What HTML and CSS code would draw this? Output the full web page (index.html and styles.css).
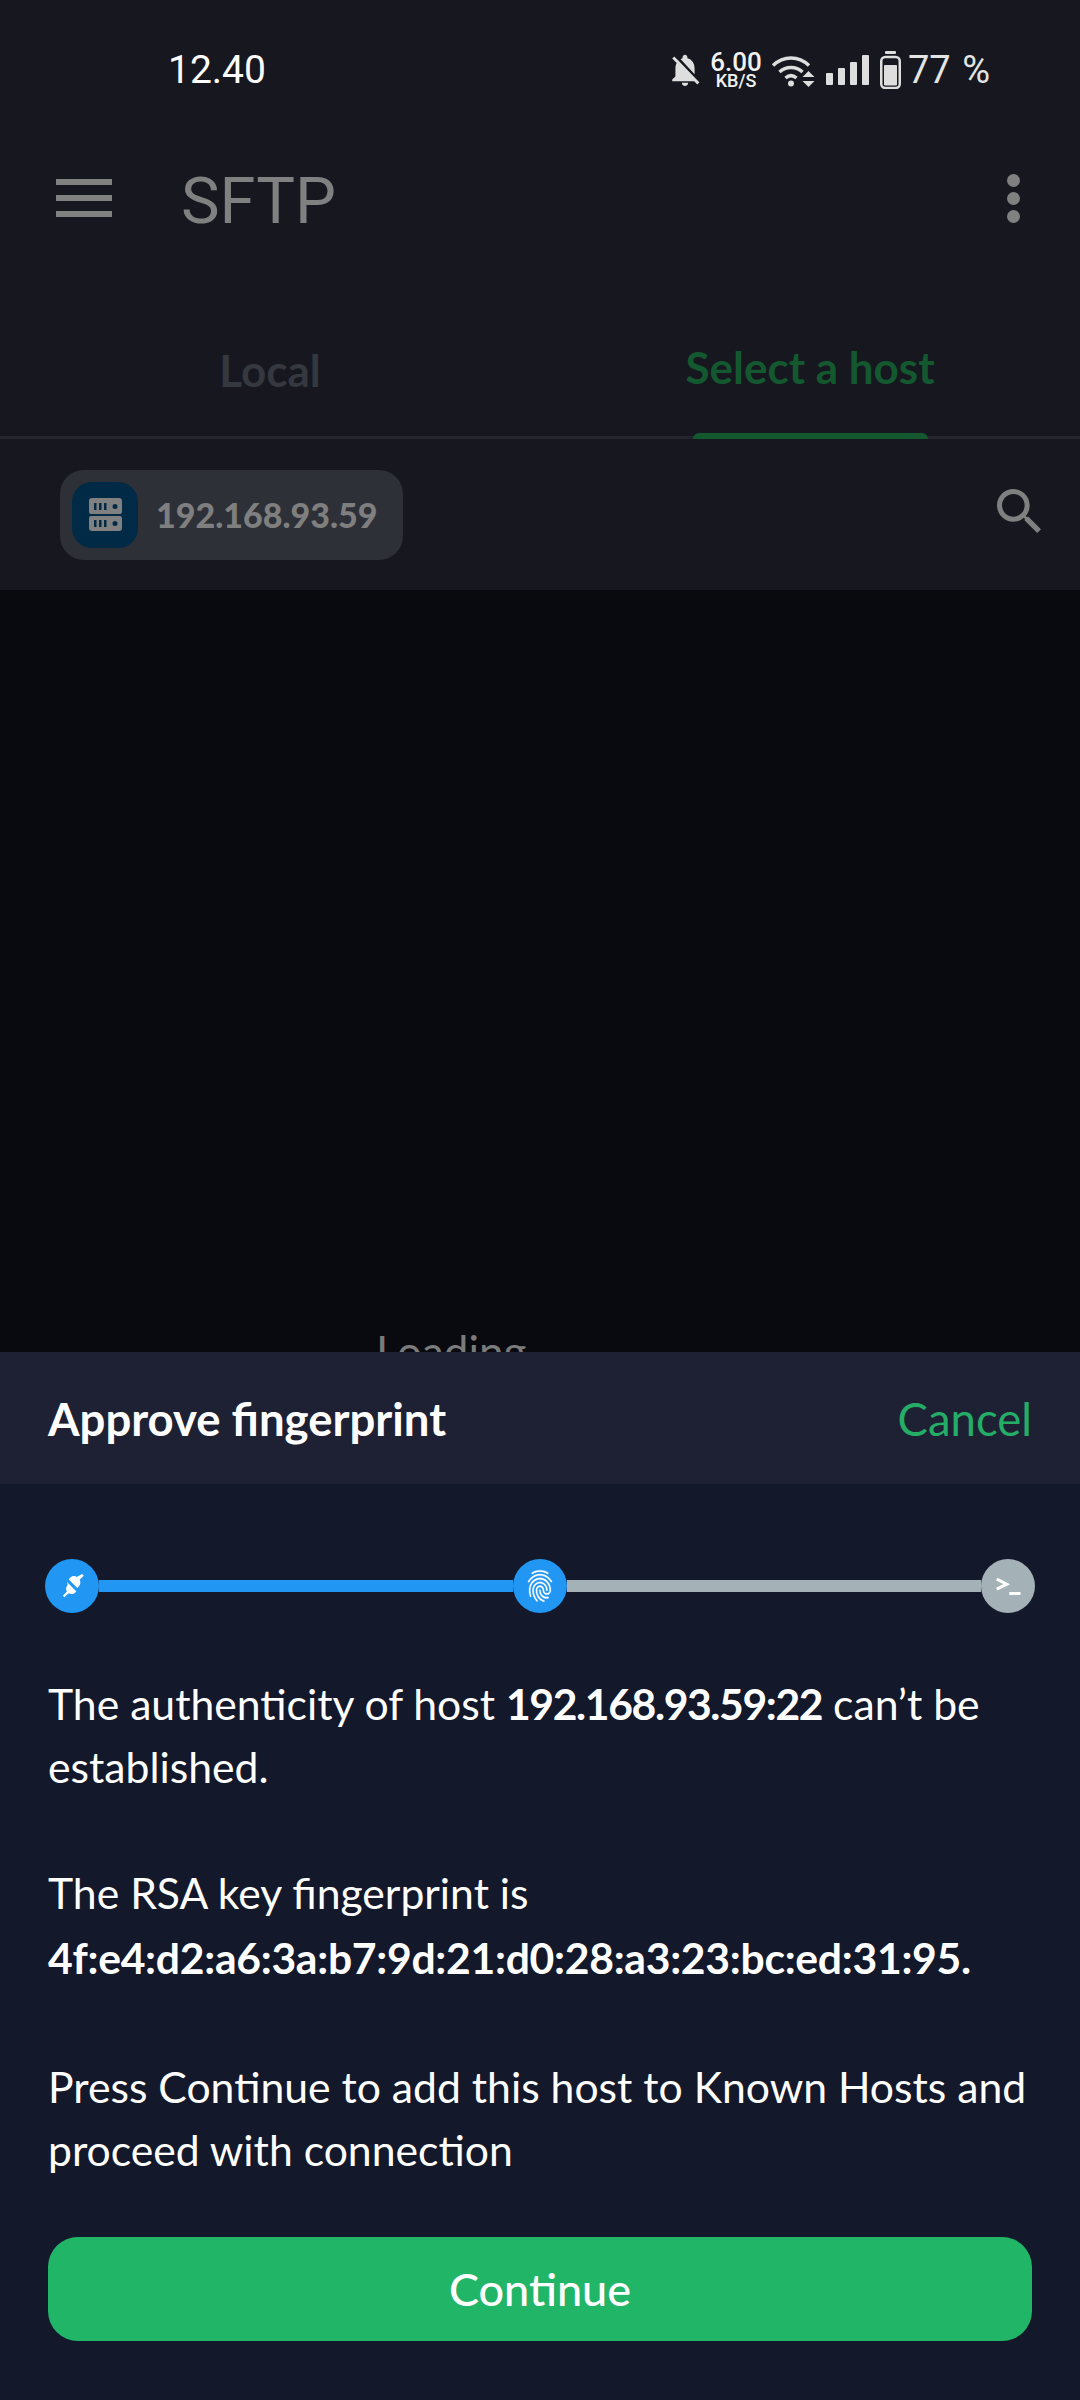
FILE: index.html
```html
<!DOCTYPE html>
<html lang="en">
<head>
<meta charset="UTF-8">
<meta name="viewport" content="width=device-width, initial-scale=1.0">
<title>SFTP</title>
<link rel="stylesheet" href="styles.css">
</head>
<body>

<div class="app">
  <div class="status-bar">
    <span class="time">12.40</span>
    <div class="status-icons">
      <svg class="icon-bell" viewBox="3 2 18 20"><path d="M20 18.69L7.84 6.14 5.27 3.49 4 4.76l2.8 2.8v.01c-.52.99-.8 2.16-.8 3.42v5l-2 2v1h13.73l2 2L21 19.72l-1-1.03zM12 22c1.11 0 2-.89 2-2h-4c0 1.11.89 2 2 2zm6-7.32V11c0-3.08-1.64-5.64-4.5-6.32V4c0-.83-.67-1.5-1.5-1.5s-1.5.67-1.5 1.5v.68c-.15.03-.29.08-.42.12-.1.03-.2.07-.3.11h-.01c-.2.08-.4.17-.59.27-.01 0-.01 0-.02.01L18 14.68z"/></svg>
      <div class="speed"><span class="speed-num">6.00</span><span class="speed-unit">KB/S</span></div>
      <svg class="icon-wifi" viewBox="0 0 44 33">
        <path class="wifi-arc" d="M2 11.500C12.500 1.500 27.500 1.500 38 11.500"/>
        <path class="wifi-arc" d="M8.500 18C15 12 25 12 31.500 18"/>
        <path class="wifi-arc" d="M14.500 24C18 21 22 21 25.500 24"/>
        <circle cx="20" cy="29.500" r="3"/>
        <path d="M37.500 17l6 6h-12zM37.500 33l-6-6h12z"/>
      </svg>
      <svg class="icon-signal" viewBox="0 0 43 30">
        <rect x="0" y="18" width="7" height="12" rx="1"/>
        <rect x="12" y="13" width="7" height="17" rx="1"/>
        <rect x="24" y="7" width="7" height="23" rx="1"/>
        <rect x="36" y="0" width="7" height="30" rx="1"/>
      </svg>
      <svg class="icon-battery" viewBox="0 0 21 38">
        <rect x="5" y="0" width="11" height="3" rx="1"/>
        <rect class="battery-shell" x="1.250" y="6" width="18.500" height="31" rx="4"/>
        <rect x="4" y="14" width="13" height="20.500" rx="1"/>
      </svg>
      <span class="battery-text">77 %</span>
    </div>
  </div>

  <div class="toolbar">
    <div class="menu-icon"><span></span><span></span><span></span></div>
    <span class="toolbar-title">SFTP</span>
    <div class="more-icon"><span></span><span></span><span></span></div>
  </div>

  <div class="tabs">
    <div class="tab"><span class="tab-label">Local</span></div>
    <div class="tab tab-active"><span class="tab-label">Select a host</span><span class="tab-line"></span></div>
  </div>

  <div class="host-row">
    <div class="host-chip">
      <div class="host-icon">
        <svg viewBox="0 0 33 33">
          <path fill-rule="evenodd" d="M3 0h27a3 3 0 0 1 3 3v11a2 2 0 0 1-2 2H2a2 2 0 0 1-2-2V3a3 3 0 0 1 3-3zM5 5v7h2.500V5zM10 5v7h2.500V5zM15 5v7h2.500V5zM26 6a2.500 2.500 0 1 0 0 5 2.500 2.500 0 0 0 0-5z"/>
          <path fill-rule="evenodd" d="M2 18h29a2 2 0 0 1 2 2v10a3 3 0 0 1-3 3H3a3 3 0 0 1-3-3V20a2 2 0 0 1 2-2zM5 22v7h2.500v-7zM10 22v7h2.500v-7zM15 22v7h2.500v-7zM26 23a2.500 2.500 0 1 0 0 5 2.500 2.500 0 0 0 0-5z"/>
        </svg>
      </div>
      <span class="host-name">192.168.93.59</span>
    </div>
    <svg class="search-icon" viewBox="3 3 17.500 17.500"><path d="M15.500 14h-.79l-.28-.27C15.410 12.590 16 11.110 16 9.500 16 5.910 13.090 3 9.500 3S3 5.910 3 9.500 5.910 16 9.500 16c1.610 0 3.090-.59 4.230-1.570l.27.28v.79l5 4.990L20.490 19l-4.990-5zm-6 0C7.010 14 5 11.990 5 9.500S7.010 5 9.500 5 14 7.010 14 9.500 11.990 14 9.500 14z"/></svg>
  </div>

  <div class="file-list">
    <span class="loading">Loading</span>
  </div>

  <div class="sheet">
    <div class="sheet-header">
      <span class="sheet-title">Approve fingerprint</span>
      <span class="sheet-cancel">Cancel</span>
    </div>
    <div class="sheet-body">
      <div class="stepper">
        <div class="step step-done">
          <svg class="step-plug" viewBox="0 0 24 24"><path d="M20.500 2.200l1.300 1.300-3.300 3.300c1 1.700.8 3.900-.7 5.300l-1.200 1.200L9.700 6.400l1.200-1.200c1.400-1.500 3.600-1.700 5.300-.7zM8.300 7.800l7.900 7.900-1.200 1.200c-1.400 1.500-3.600 1.700-5.300.7l-3.400 3.200-1.200-1.200 3.200-3.400c-1-1.700-.8-3.900.7-5.300z" transform="translate(-.4 .2)"/><path class="plug-gap" d="M5 5l14 14"/></svg>
        </div>
        <div class="bar bar-done"></div>
        <div class="step step-done">
          <svg class="step-print" viewBox="0 0 24 24" preserveAspectRatio="none"><path d="M17.810 4.470c-.08 0-.16-.02-.23-.06C15.660 3.420 14 3 12.010 3c-1.980 0-3.860.47-5.570 1.410-.24.13-.54.04-.68-.2-.13-.24-.04-.55.2-.68C7.820 2.520 9.860 2 12.010 2c2.130 0 3.990.47 6.030 1.520.25.13.34.43.21.67-.09.18-.26.28-.44.28zM3.500 9.720c-.1 0-.2-.03-.29-.09-.23-.16-.28-.47-.12-.7.99-1.400 2.250-2.500 3.750-3.270C9.980 4.040 14 4.030 17.150 5.650c1.500.77 2.760 1.860 3.750 3.250.16.22.11.54-.12.7-.23.16-.54.11-.7-.12-.9-1.260-2.040-2.250-3.390-2.940-2.870-1.470-6.540-1.470-9.400.01-1.360.7-2.500 1.700-3.400 2.960-.08.14-.23.21-.39.21zm6.250 12.070c-.13 0-.26-.05-.35-.15-.87-.87-1.340-1.430-2.010-2.640-.69-1.230-1.050-2.730-1.050-4.340 0-2.970 2.540-5.390 5.660-5.390s5.660 2.420 5.660 5.390c0 .28-.22.5-.5.5s-.5-.22-.5-.5c0-2.420-2.090-4.390-4.660-4.390s-4.660 1.970-4.660 4.390c0 1.440.32 2.770.93 3.850.64 1.150 1.080 1.640 1.850 2.420.19.2.19.51 0 .71-.11.1-.24.15-.37.15zm7.170-1.850c-1.190 0-2.240-.3-3.100-.89-1.490-1.010-2.380-2.650-2.380-4.390 0-.28.22-.5.5-.5s.5.22.5.5c0 1.410.72 2.740 1.940 3.560.71.48 1.540.71 2.540.71.24 0 .64-.03 1.040-.1.27-.05.53.13.58.41.05.27-.13.53-.41.58-.57.11-1.070.12-1.210.12zM14.910 22c-.04 0-.09-.01-.13-.02-1.590-.44-2.630-1.030-3.720-2.100-1.400-1.390-2.170-3.240-2.170-5.220 0-1.620 1.380-2.940 3.080-2.940s3.080 1.320 3.080 2.940c0 1.070.93 1.940 2.080 1.940s2.080-.87 2.080-1.940c0-3.770-3.250-6.830-7.250-6.830-2.840 0-5.440 1.580-6.610 4.030-.39.81-.59 1.760-.59 2.800 0 .78.07 2.010.67 3.610.1.26-.03.55-.29.64-.26.1-.55-.04-.64-.29-.49-1.310-.73-2.610-.73-3.960 0-1.200.23-2.290.68-3.240 1.330-2.790 4.280-4.600 7.510-4.600 4.550 0 8.250 3.510 8.250 7.830 0 1.620-1.380 2.940-3.080 2.940s-3.080-1.320-3.080-2.940c0-1.070-.93-1.940-2.080-1.940s-2.080.87-2.080 1.940c0 1.710.66 3.310 1.870 4.510.95.94 1.860 1.460 3.270 1.850.27.07.42.35.35.61-.05.23-.26.38-.47.38z"/></svg>
        </div>
        <div class="bar"></div>
        <div class="step step-todo">
          <svg class="step-prompt" viewBox="0 0 24 24"><path class="prompt" d="M3 6.500l8 4-8 4"/><path class="prompt" d="M13 18h9"/></svg>
        </div>
      </div>

      <div class="message">
        <p>The authenticity of host <b class="address">192.168.93.59:22</b> can’t be established.</p>
        <p>The RSA key fingerprint is <b class="key">4f:e4:d2:a6:3a:b7:9d:21:d0:28:a3:23:bc:ed:31:95.</b></p>
        <p>Press Continue to add this host to Known Hosts and proceed with connection</p>
      </div>

      <div class="continue-btn">Continue</div>
    </div>
  </div>
</div>

</body>
</html>
```

FILE: styles.css
```css
body {
  margin: 0;
  padding: 0;
  background-color: #16171f;
  font-family: Lato, "Noto Sans", sans-serif;
}
.app {
  width: 1080px;
  height: 2400px;
  display: flex;
  flex-direction: column;
  overflow: hidden;
}

/* status bar */
.status-bar {
  height: 140px;
  box-sizing: border-box;
  padding: 0 90px 0 168px;
  display: flex;
  align-items: center;
  justify-content: space-between;
  color: #f2f2f2;
}
.time {
  font-family: Roboto, sans-serif;
  font-size: 39px;
  color: #fff;
}
.status-icons {
  display: flex;
  align-items: center;
  fill: #dedede;
}
.icon-bell {
  width: 30px;
  height: 32px;
  margin-right: 10px;
}
.speed {
  width: 52px;
  display: flex;
  flex-direction: column;
  align-items: center;
  font-family: Roboto, sans-serif;
  font-weight: 500;
  margin-right: 9px;
}
.speed-num {
  font-size: 26px;
  line-height: 22px;
}
.speed-unit {
  font-size: 18px;
  line-height: 16px;
}
.icon-wifi {
  width: 44px;
  height: 33px;
  margin-right: 11px;
}
.wifi-arc {
  fill: none;
  stroke: #dedede;
  stroke-width: 3.500;
}
.icon-signal {
  width: 43px;
  height: 30px;
  margin-right: 11px;
}
.icon-battery {
  width: 21px;
  height: 38px;
  margin-right: 7px;
}
.battery-shell {
  fill: none;
  stroke: #dedede;
  stroke-width: 2.500;
}
.battery-text {
  font-family: Roboto, sans-serif;
  font-size: 38px;
  color: #e4e4e4;
  word-spacing: 2px;
}

/* toolbar */
.toolbar {
  height: 116px;
  margin-bottom: 44px;
  box-sizing: border-box;
  padding: 0 60px 0 56px;
  display: flex;
  align-items: center;
}
.menu-icon {
  width: 56px;
  display: flex;
  flex-direction: column;
  gap: 10px;
}
.menu-icon span {
  height: 6px;
  background-color: #808080;
}
.toolbar-title {
  margin-left: 69px;
  padding-top: 5px;
  flex: 1;
  font-family: Roboto, sans-serif;
  font-size: 65px;
  color: #808080;
}
.more-icon {
  display: flex;
  flex-direction: column;
  gap: 5px;
}
.more-icon span {
  width: 13px;
  height: 13px;
  border-radius: 50%;
  background-color: #808080;
}

/* tabs */
.tabs {
  height: 139px;
  display: grid;
  grid-template-columns: 540px 540px;
  box-shadow: inset 0 -3px 0 #24262e;
}
.tab {
  display: flex;
  flex-direction: column;
  align-items: center;
  font-size: 44px;
  font-weight: 700;
  color: #35383f;
}
.tab-label {
  flex: 1;
  display: flex;
  align-items: center;
}
.tab-active {
  color: #14582f;
}
.tab-line {
  width: 235px;
  height: 6px;
  background-color: #14582f;
  border-radius: 6px 6px 0 0;
}

/* host row */
.host-row {
  height: 151px;
  box-sizing: border-box;
  padding: 0 39px 0 60px;
  display: flex;
  align-items: center;
  justify-content: space-between;
}
.host-chip {
  height: 90px;
  width: 343px;
  box-sizing: border-box;
  padding-left: 12px;
  display: flex;
  align-items: center;
  gap: 18px;
  background-color: #2e3038;
  border-radius: 24px;
}
.host-icon {
  width: 66px;
  height: 66px;
  display: flex;
  align-items: center;
  justify-content: center;
  background-color: #012a47;
  border-radius: 20px;
}
.host-icon svg {
  width: 33px;
  height: 33px;
  fill: #808080;
}
.host-name {
  font-size: 34px;
  font-weight: 900;
  color: #7f7f7f;
}
.search-icon {
  width: 44px;
  height: 44px;
  margin-bottom: 8px;
  fill: #808080;
}

/* list behind the sheet */
.file-list {
  flex: 1;
  min-height: 0;
  overflow: hidden;
  background-color: #090a0f;
  box-sizing: border-box;
  padding: 735px 0 0 376px;
}
.loading {
  font-size: 44px;
  line-height: 52px;
  color: #7b7b7b;
}

/* bottom sheet */
.sheet {
  height: 1048px;
  flex-shrink: 0;
  display: flex;
  flex-direction: column;
  background-color: #13182b;
  color: #fff;
}
.sheet-header {
  height: 132px;
  box-sizing: border-box;
  padding: 0 48px;
  display: flex;
  align-items: center;
  justify-content: space-between;
  background-color: #1d2133;
}
.sheet-title {
  font-size: 45.500px;
  font-weight: 700;
}
.sheet-cancel {
  font-size: 45.500px;
  color: #25ad67;
}
.sheet-body {
  padding: 75px 48px 0;
}
.stepper {
  margin: 0 -3px;
  display: flex;
  align-items: center;
}
.step {
  width: 54px;
  height: 54px;
  flex-shrink: 0;
  border-radius: 50%;
  display: flex;
  align-items: center;
  justify-content: center;
  fill: #fff;
}
.step-plug,
.step-prompt {
  width: 30px;
  height: 30px;
}
.step-print {
  width: 32px;
  height: 38px;
  stroke: #fff;
  stroke-width: .2;
}
.step-done {
  background-color: #2196f3;
}
.step-todo {
  background-color: #a4b1b7;
}
.bar {
  flex: 1;
  height: 12px;
  background-color: #a4b1b7;
}
.bar-done {
  background-color: #2196f3;
}
.plug-gap {
  fill: none;
  stroke: #2196f3;
  stroke-width: 1.200;
}
.prompt {
  fill: none;
  stroke: #fff;
  stroke-width: 2.400;
}
.message {
  margin-top: 59px;
  font-size: 42.700px;
  line-height: 63px;
}
.message p {
  margin: 0 0 63px;
}
.message p:last-child {
  margin-bottom: 56px;
}
.address {
  letter-spacing: -1.400px;
}
.key {
  letter-spacing: -.3px;
  line-height: 68px;
}
.continue-btn {
  height: 104px;
  display: flex;
  align-items: center;
  justify-content: center;
  background-color: #21b568;
  border-radius: 30px;
  font-size: 45px;
  font-weight: 500;
}
```
